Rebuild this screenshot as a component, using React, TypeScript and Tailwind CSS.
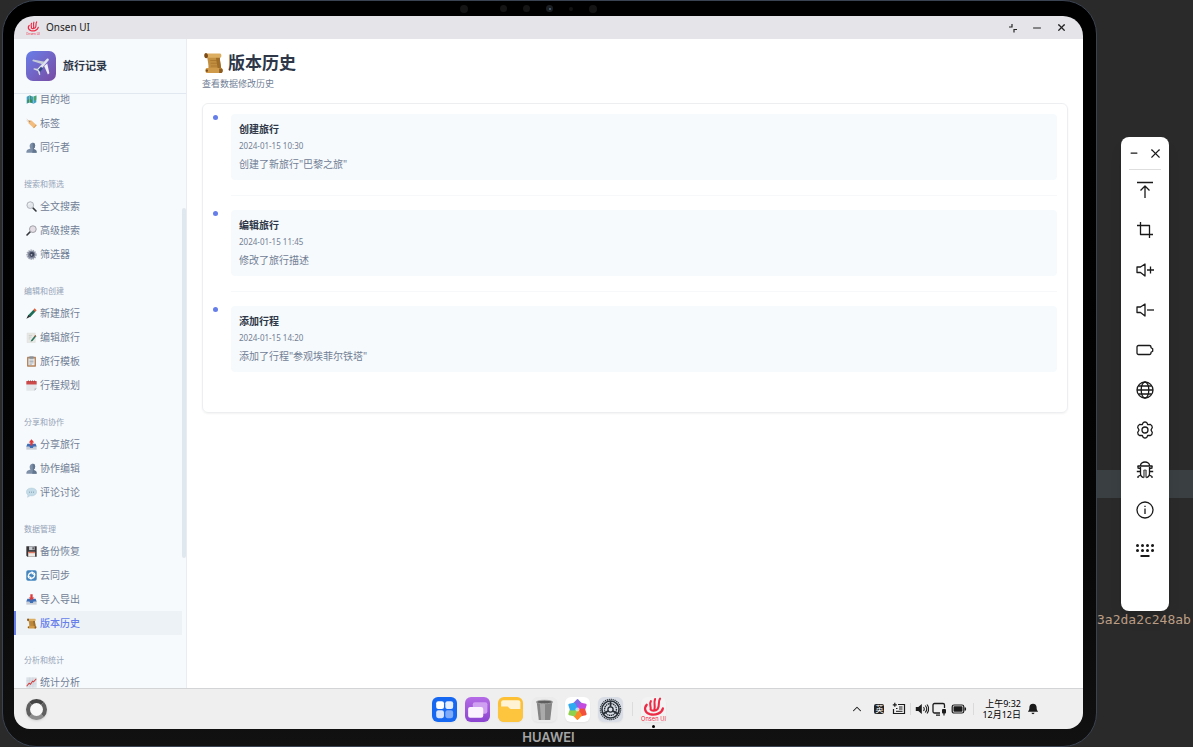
import type { ReactNode } from "react";
import { ChevronUp, Minus, X } from "lucide-react";

type IconProps = { className?: string };

const Svg = ({
  box = 16,
  className,
  children,
}: {
  box?: number;
  className?: string;
  children: ReactNode;
}) => (
  <svg
    viewBox={`0 0 ${box} ${box}`}
    className={className}
    fill="none"
    aria-hidden="true"
  >
    {children}
  </svg>
);

const emojis: Record<string, ReactNode> = {
  map: (
    <>
      <path d="M1 4l4-2 6 2 4-2v10l-4 2-6-2-4 2z" fill="#3f9fc4" />
      <path d="M5 2l2.500.8-.5 4L9 9v4.200L5 12 2 13.500V9l3-2z" fill="#3c8f5c" />
      <path d="M11 4l4-2v6l-3 2-2-3z" fill="#4ca36a" />
      <path d="M5 2v10M11 4v10" stroke="#c9e4ea" strokeWidth=".7" />
    </>
  ),
  tag: (
    <>
      <path d="M3.500 3l4.500.5 7.500 7-4 4.500-8-7.500z" fill="#f2bd7f" />
      <path d="M15.500 10.500l-4 4.500-1-1 4-4.500z" fill="#d99a55" />
      <circle cx="5.300" cy="5.200" r="1" fill="#8a6a4a" />
      <path d="M5 5L1 1.500M5 5.500L.8 4" stroke="#c9b9a5" strokeWidth=".8" />
    </>
  ),
  people: (
    <>
      <path
        d="M.5 15.500c0-3 1-4.500 4-5.200l2-1C4.500 7 5 1.500 9.500 1.200 13 1.200 14 4 13 7.500l-1.500 2 .3 1c2.700.6 3.700 2 3.700 5z"
        fill="#7d90a8"
      />
      <path
        d="M9.500 1.200C13 1.200 14 4 13 7.500l-1.500 2 .3 1c2.700.6 3.700 2 3.700 5H9l1-5z"
        fill="#62768f"
      />
    </>
  ),
  search: (
    <>
      <path d="M9.500 9.500l5 5" stroke="#33363b" strokeWidth="2.400" strokeLinecap="round" />
      <circle cx="6.200" cy="6" r="4.900" fill="#e3e6ea" stroke="#a6abb2" strokeWidth="1.200" />
      <path d="M3.800 5.500a2.700 2.700 0 012.600-2.200" stroke="#fff" />
    </>
  ),
  searchRight: (
    <>
      <path d="M6.500 9.500l-5 5" stroke="#33363b" strokeWidth="2.400" strokeLinecap="round" />
      <circle cx="10" cy="6" r="4.900" fill="#e5dde4" stroke="#8f9299" strokeWidth="1.200" />
    </>
  ),
  gear: (
    <>
      <circle cx="8" cy="8.300" r="6.600" stroke="#a3a8b4" strokeWidth="2" strokeDasharray="2 1.200" />
      <circle cx="8" cy="8.300" r="5.800" fill="#80879a" />
      <circle cx="8.500" cy="8" r="3.600" fill="#3c4257" />
      <circle cx="8" cy="8.500" r="1.300" fill="#b4b9c6" />
    </>
  ),
  crayon: (
    <>
      <path d="M12.500.5l3 2.700-2.500 3-3-2.700z" fill="#d9603c" />
      <path d="M10.500 3l3 2.600-7.500 7.900-3.200-2.700z" fill="#1d6e58" />
      <path d="M3.300 10.300l2.900 2.600L.5 15.500z" fill="#272b2d" />
    </>
  ),
  memo: (
    <>
      <path d="M1.500 1.500h12v14h-12z" fill="#e9e8e4" stroke="#d4d5d2" strokeWidth=".5" />
      <path d="M4 5h5M4 7.500h4M4 10h2" stroke="#b3b9bd" strokeWidth=".8" />
      <path d="M13.500 4.500l1.500 1.500-5.500 7-2.800.8.900-2.300z" fill="#287560" />
      <path d="M13.500 4.500L15 6l-1 1.100-1.500-1.400z" fill="#cc5e43" />
    </>
  ),
  clipboard: (
    <>
      <rect x="1.500" y="1" width="13" height="14.500" rx="1" fill="#b4835a" />
      <path d="M3.500 3.500h9v10h-9z" fill="#ebeef0" />
      <path d="M5 .5h6v3.500H5z" fill="#85909c" />
      <path d="M5 6h6M5 8h6M5 10h6M5 12h3.500" stroke="#7e8994" strokeWidth=".8" />
    </>
  ),
  calendar: (
    <>
      <path d="M.5 3h15v9.500l-3 3H.5z" fill="#e4e7ea" />
      <path d="M.5 1.500h15v5H.5z" fill="#ce4a4a" />
      <path d="M12.500 15.500v-3h3z" fill="#a6abb0" />
      <path d="M3.500.5v2M6.500.5v2M9.500.5v2M12.500.5v2" stroke="#86383c" />
    </>
  ),
  outbox: (
    <>
      <path d="M.5 10h15v5.500H.5z" fill="#c9ced6" />
      <path d="M2 7h12l1.500 4H11l-1 2H6l-1-2H.5z" fill="#3d6fb8" />
      <path d="M8 .5l4 4.500H9.700v4.500H6.300V5H4z" fill="#de3b3b" />
    </>
  ),
  inbox: (
    <>
      <path d="M.5 10h15v5.500H.5z" fill="#c9ced6" />
      <path d="M2 7h12l1.500 4H11l-1 2H6l-1-2H.5z" fill="#3d6fb8" />
      <path d="M8 9.500L4 5h2.300V.5h3.400V5H12z" fill="#de3b3b" />
    </>
  ),
  speech: (
    <>
      <path
        d="M8 1.500c4.400 0 7.500 2.400 7.500 5.700S12.400 13 8 13l-2-.2L2.200 15l.7-3.500C1.400 10.500.5 9 .5 7.200c0-3.300 3.100-5.700 7.500-5.700z"
        fill="#c4dbe8"
        stroke="#a8c6d8"
        strokeWidth=".6"
      />
      <path d="M4.500 7.500h1.300M7.400 7.500h1.300M10.200 7.500h1.300" stroke="#6f8da2" strokeWidth="1.300" />
    </>
  ),
  floppy: (
    <>
      <path d="M.5.5h15v15H2L.5 14z" fill="#373538" />
      <path d="M4.500.5h8V6h-8z" fill="#c6cbd0" />
      <path d="M9.500 1.700h1.700V5H9.500z" fill="#373538" />
      <path d="M3.200 8.500h10v7h-10z" fill="#eeeae6" />
      <path d="M3.200 8.500h10v2h-10z" fill="#df7862" />
    </>
  ),
  sync: (
    <>
      <rect x=".4" y=".4" width="15.200" height="15.200" rx="2.500" fill="#4486bd" />
      <path
        d="M4.200 10.500A4.300 4.300 0 018.500 4M11.800 5.500A4.300 4.300 0 017.500 12"
        stroke="#fff"
        strokeWidth="2"
      />
      <path d="M8 1.500L12 4 8.500 7zM8 14.500L4 12l3.500-3zM2 9h4.500L3.500 12.500zM14 7H9.500l3-3.500z" fill="#fff" />
    </>
  ),
  scroll: (
    <>
      <path d="M3.500 2h9.800c-.8 3 .5 6 .7 10.500H4.700C5 9 4 6 3.500 2z" fill="#c28e40" />
      <path d="M10 3.500h3.200c-.6 3 .6 5 .8 9h-2.500z" fill="#a06d29" />
      <path d="M2.500 1h10.700c1.100.3 1.200 2.600.1 3.200H4.500z" fill="#dcae62" />
      <path d="M2.700.8C4.500.8 5 4.200 3.200 4.600 1.400 4.900 1 1.200 2.700.8z" fill="#7b4c17" />
      <path d="M3.500 11.700h10.800c1.200.6 1 3.400-.3 3.600H3.500c-1.500-.3-1.500-3.300 0-3.600z" fill="#cf9b4b" />
      <path d="M12.500 12h1.800c1.200.6 1 3-.3 3.200h-1.500z" fill="#8d5c20" />
      <path d="M3.500 12.600c1.200.2 1.200 1.800 0 2-1-.2-1-1.800 0-2z" fill="#7b4c17" />
      <path d="M6 6.200h5M6.300 8.200h5M6.500 10.200h5" stroke="#a3712c" strokeWidth=".5" />
    </>
  ),
  chart: (
    <>
      <path d="M.5.5h15v15H.5z" fill="#dbe1e7" />
      <path d="M.5 5.500h15M.5 10h15M5.500.5v15M10 .5v15" stroke="#bdc7d1" strokeWidth=".5" />
      <path d="M1 13.500l3.500-4.500 2 1.500 3-4.500 1.500 1L15 2.500" stroke="#d33f3f" strokeWidth="1.500" />
    </>
  ),
  plane: (
    <>
      <path d="M12.700 2.200c1.300-.5 1.800.2 1.300 1.400L6.300 12.600 4.500 11z" fill="#dfe4ec" />
      <path d="M9 6.500L1 4l.6-1.200L11 4.500z" fill="#c4cbd7" />
      <path d="M10.500 8l3 6.800 1.200-1L13 6z" fill="#eef0f3" />
      <path d="M6 10.300l-3.700-.5-.4.8 3.400 1.300zM7 11.500l.4 3.500-.8.4-1.300-3.600z" fill="#d5dae3" />
      <path d="M8 8.500L5.800 11l1.500 1.800L9.500 10z" fill="#314a82" />
    </>
  ),
};

const Emoji = ({ name, className }: { name: string; className?: string }) => (
  <Svg className={className}>{emojis[name]}</Svg>
);

const OnsenMark = ({ className }: IconProps) => (
  <svg viewBox="0 0 24 24" className={className} fill="none" aria-hidden="true">
    <path
      d="M5.500 7.500c-3 3.500-1.500 7.500 3 9 5.500 1.500 11.500-1 12.500-5.500"
      stroke="#ee2b46"
      strokeWidth="2.200"
      strokeLinecap="round"
    />
    <path
      d="M9.500 4c-2 3 .5 5-.3 8M13.500 2c-1.600 4 .5 6-.6 10M18.300 1.500c-2.500 3.500.2 6-2.300 10M9.200 12c.8 1.500 5 1.500 6.800-.5"
      stroke="#ee2b46"
      strokeWidth="2"
      strokeLinecap="round"
    />
    <text
      x="12"
      y="23.500"
      textAnchor="middle"
      fontSize="5.500"
      fontFamily="Inter, sans-serif"
      fill="#ee2b46"
    >
      Onsen UI
    </text>
  </svg>
);

type NavItem = { icon: string; label: string; active?: boolean };

const sections: { title?: string; items: NavItem[] }[] = [
  {
    items: [
      { icon: "map", label: "目的地" },
      { icon: "tag", label: "标签" },
      { icon: "people", label: "同行者" },
    ],
  },
  {
    title: "搜索和筛选",
    items: [
      { icon: "search", label: "全文搜索" },
      { icon: "searchRight", label: "高级搜索" },
      { icon: "gear", label: "筛选器" },
    ],
  },
  {
    title: "编辑和创建",
    items: [
      { icon: "crayon", label: "新建旅行" },
      { icon: "memo", label: "编辑旅行" },
      { icon: "clipboard", label: "旅行模板" },
      { icon: "calendar", label: "行程规划" },
    ],
  },
  {
    title: "分享和协作",
    items: [
      { icon: "outbox", label: "分享旅行" },
      { icon: "people", label: "协作编辑" },
      { icon: "speech", label: "评论讨论" },
    ],
  },
  {
    title: "数据管理",
    items: [
      { icon: "floppy", label: "备份恢复" },
      { icon: "sync", label: "云同步" },
      { icon: "inbox", label: "导入导出" },
      { icon: "scroll", label: "版本历史", active: true },
    ],
  },
  {
    title: "分析和统计",
    items: [{ icon: "chart", label: "统计分析" }],
  },
];

const versions = [
  { title: "创建旅行", time: "2024-01-15 10:30", text: '创建了新旅行"巴黎之旅"' },
  { title: "编辑旅行", time: "2024-01-15 11:45", text: "修改了旅行描述" },
  { title: "添加行程", time: "2024-01-15 14:20", text: '添加了行程"参观埃菲尔铁塔"' },
];

const TitleBar = () => (
  <header className="flex h-[23px] shrink-0 items-center bg-[#e5e4e9] pl-3 pr-4 text-[#222]">
    <OnsenMark className="size-[14px]" />
    <span className="ml-1.5 text-[10px]">Onsen UI</span>
    <div className="ml-auto flex gap-3">
      <button aria-label="还原" className="flex size-3 items-center justify-center">
        <Svg box={12} className="size-3">
          <path d="M5 2v3H2M7 10.500V7.500h3" stroke="currentColor" strokeWidth="1.200" />
        </Svg>
      </button>
      <button aria-label="最小化" className="flex size-3 items-center justify-center">
        <Minus size={12} />
      </button>
      <button aria-label="关闭" className="flex size-3 items-center justify-center">
        <X size={11} strokeWidth={2.8} />
      </button>
    </div>
  </header>
);

const Sidebar = () => (
  <aside className="flex w-[173px] shrink-0 flex-col border-r border-[#e8edf2] bg-[#f7fafc]">
    <div className="flex items-center gap-[7px] border-b border-[#e2e8f0] p-3">
      <div className="flex size-[30px] items-center justify-center rounded-[7px] bg-linear-135 from-[#667eea] to-[#764ba2]">
        <Emoji name="plane" className="size-5" />
      </div>
      <span className="text-[11px] font-bold text-[#2d3748]">旅行记录</span>
    </div>
    <div className="flex min-h-0 flex-1">
      <nav className="min-h-0 flex-1 overflow-hidden">
        <div className="-mt-[7px]">
          {sections.map((section, i) => (
            <section key={i}>
              {section.title && (
                <h2 className="pb-1 pl-[10px] pt-[19px] text-[8px] leading-3 text-[#94a3b8]">
                  {section.title}
                </h2>
              )}
              {section.items.map((item) => (
                <a
                  key={item.label}
                  href="#"
                  className={`flex h-6 items-center gap-[3px] border-l-2 pl-[10px] text-[10px] leading-3 ${
                    item.active
                      ? "border-[#667eea] bg-[#edf2f7] font-medium text-[#667eea]"
                      : "border-transparent text-[#718096]"
                  }`}
                >
                  <Emoji name={item.icon} className="size-[11px]" />
                  {item.label}
                </a>
              ))}
            </section>
          ))}
        </div>
      </nav>
      <div className="w-1 pt-[114px]">
        <div className="h-[350px] rounded-full bg-[#e0e8ef]" />
      </div>
    </div>
  </aside>
);

const Main = () => (
  <main className="min-w-0 flex-1 bg-white px-[15px] pt-3">
    <h1 className="flex items-center gap-1 text-[17px] font-bold leading-6 text-[#2d3748]">
      <Emoji name="scroll" className="size-[22px]" />
      版本历史
    </h1>
    <p className="mt-[3px] text-[9px] leading-3 text-[#718096]">查看数据修改历史</p>
    <div className="mt-[13px] rounded-md border border-[#eceef0] p-[10px] shadow-xs">
      {versions.map((v, i) => (
        <article key={v.time} className="flex gap-[13px]">
          <span className="mt-px size-[5px] shrink-0 rounded-full bg-[#667eea]" />
          <div
            className={`mb-3.5 flex-1 border-b pb-[15px] ${
              i < versions.length - 1 ? "border-[#f7f8fa]" : "border-transparent"
            }`}
          >
            <div className="rounded bg-[#f7fafc] p-2">
              <h3 className="text-[10px] font-bold leading-[14px] text-[#2d3748]">{v.title}</h3>
              <time className="mt-1 block text-[8px] leading-3 text-[#718096]">{v.time}</time>
              <p className="mt-1 text-[10px] leading-4 text-[#718096]">{v.text}</p>
            </div>
          </div>
        </article>
      ))}
    </div>
  </main>
);

const petals = [
  { angle: "rotate(0 12 12)", color: "#7d6be8" },
  { angle: "rotate(60 12 12)", color: "#c34be0" },
  { angle: "rotate(120 12 12)", color: "#f2503c" },
  { angle: "rotate(180 12 12)", color: "#fb8a25" },
  { angle: "rotate(240 12 12)", color: "#8fd14a" },
  { angle: "rotate(300 12 12)", color: "#2fa9f0" },
];

const dockApps = [
  {
    name: "应用中心",
    tile: "bg-[#1667f2]",
    art: (
      <>
        <rect x="4" y="4" width="7.500" height="7.500" rx="2" fill="#fff" />
        <rect x="12.800" y="4" width="7.500" height="7.500" rx="2" fill="#e5eefe" />
        <rect x="4" y="12.800" width="7.500" height="7.500" rx="2" fill="#d6e4fd" />
        <rect x="12.800" y="12.800" width="7.500" height="7.500" rx="2" fill="#7faaf8" />
      </>
    ),
  },
  {
    name: "多任务",
    tile: "bg-linear-to-b from-[#b56be6] to-[#8b44cf]",
    art: (
      <>
        <rect x="7.500" y="5" width="14" height="11" rx="2" fill="#cfa0ef" />
        <rect x="3" y="9.500" width="14.500" height="10.500" rx="2" fill="#fbf3ff" />
      </>
    ),
  },
  {
    name: "文件管理",
    tile: "bg-[#fdbf33]",
    art: (
      <>
        <path d="M3 5a2 2 0 012-2h14.500a2 2 0 012 2v8H3z" fill="#fff3d3" />
        <path d="M0 9h9c1.500 0 1.500 2.500 3.500 2.500H24V19a5 5 0 01-5 5H5a5 5 0 01-5-5z" fill="#fdc43d" />
      </>
    ),
  },
  {
    name: "回收站",
    tile: "bg-[#ebebeb]",
    art: (
      <>
        <path d="M4.500 4.500h15L17.500 22h-11z" fill="#858585" />
        <path d="M7.500 6l1.200 16h3.800V6z" fill="#aaa" />
        <ellipse cx="12" cy="4.800" rx="7.800" ry="1.700" fill="#5d5d5d" stroke="#a5a5a5" strokeWidth=".8" />
      </>
    ),
  },
  {
    name: "图库",
    tile: "bg-white",
    art: (
      <>
        {petals.map((p) => (
          <path
            key={p.color}
            d="M12 11.500L8.800 6.500 12 3l3.200 3.500z"
            fill={p.color}
            stroke={p.color}
            strokeWidth="2"
            strokeLinejoin="round"
            transform={p.angle}
          />
        ))}
        <circle cx="12" cy="12" r="2" fill="#fff" opacity=".6" />
      </>
    ),
  },
  {
    name: "设置",
    tile: "bg-[#d9dee6]",
    art: (
      <>
        <circle cx="12" cy="12" r="9.700" stroke="#262c33" strokeWidth="1.300" strokeDasharray="1.100 .8" />
        <circle cx="12" cy="12" r="8.200" stroke="#262c33" strokeWidth="1.500" />
        <circle cx="12" cy="12" r="5.700" stroke="#262c33" strokeWidth="1.300" strokeDasharray="1.200 .6" />
        <circle cx="12" cy="12" r="2.500" stroke="#262c33" strokeWidth="1.300" />
        <path d="M12 9.300V4M9.700 13.400L5 16M14.300 13.400L19 16" stroke="#262c33" strokeWidth="1.700" />
      </>
    ),
  },
];

const Taskbar = () => (
  <footer className="grid h-[41px] shrink-0 grid-cols-[1fr_auto_1fr] items-center border-t border-[#d3d4d6] bg-[#efefef]">
    <button
      aria-label="主页"
      className="ml-3 size-[21px] rounded-full border-4 border-[#5f5f5f] border-b-[#8c8c8c] border-t-[#454545] bg-[#f7f7f7] shadow"
    />
    <div className="flex items-center">
      <div className="flex w-[192px] justify-between">
        {dockApps.map((app) => (
          <button
            key={app.name}
            aria-label={app.name}
            className={`size-[25px] overflow-hidden rounded-[6px] shadow-xs ${app.tile}`}
          >
            <Svg box={24} className="size-full">
              {app.art}
            </Svg>
          </button>
        ))}
      </div>
      <div className="mx-2 h-[14px] w-px bg-[#dcdcdc]" />
      <button
        aria-label="Onsen UI"
        className="relative size-[25px] rounded-[6px] bg-[#f3f3f3] shadow-xs"
      >
        <OnsenMark className="size-full" />
        <span className="absolute -bottom-[6px] left-[11px] size-[3px] rounded-full bg-black" />
      </button>
    </div>
    <div className="flex items-center justify-end pr-11 text-[#1b1b1b]">
      <ChevronUp size={14} strokeWidth={1.8} />
      <span className="ml-2.5 flex size-[10px] items-center justify-center rounded-xs bg-[#242424] text-[8px] leading-none text-white">
        英
      </span>
      <Svg box={14} className="ml-2 size-[14px]">
        <path d="M6 2.500h6.500v9h-11V7" stroke="currentColor" strokeWidth="1.200" />
        <path d="M2.800.8v4M.8 2.800h4" stroke="currentColor" strokeWidth="1.200" />
        <path d="M4 6.500h1.500M7 5h3.500M7 7h3.500M4 9.300h6.500" stroke="currentColor" />
      </Svg>
      <div className="ml-1 h-3 w-px bg-[#dadada]" />
      <Svg box={14} className="ml-1 size-[14px]">
        <path d="M.8 5h2.500L6.800 2v10L3.300 9H.8z" fill="currentColor" />
        <path
          d="M8.500 5c.9 1.200.9 2.800 0 4M10.200 3.500c1.800 2 1.800 5 0 7M12 2.500c2 2.700 2 6.300 0 9"
          stroke="currentColor"
          strokeWidth="1.100"
        />
      </Svg>
      <Svg box={16} className="ml-0.5 size-4">
        <path
          d="M9 12H3.500A1.500 1.500 0 012 10.500V4a1.500 1.500 0 011.500-1.500H12A1.500 1.500 0 0113.500 4v3M5 14.200h4"
          stroke="currentColor"
          strokeWidth="1.300"
        />
        <rect x="11" y="8" width="4" height="4.500" rx="1" fill="currentColor" />
        <path d="M13 12v2.500" stroke="currentColor" strokeWidth="1.200" />
      </Svg>
      <Svg box={16} className="ml-1 size-4">
        <rect x="1.200" y="4" width="11.600" height="8" rx="1.800" stroke="currentColor" strokeWidth="1.200" />
        <rect x="2.500" y="5.300" width="9" height="5.400" rx=".8" fill="currentColor" />
        <path d="M14.300 6.500v3" stroke="currentColor" strokeWidth="1.500" />
      </Svg>
      <div className="ml-1.5 h-3 w-px bg-[#dadada]" />
      <div className="ml-2 text-right text-[9px] leading-[11px] text-black">
        <div>上午9:32</div>
        <div>12月12日</div>
      </div>
      <Svg box={12} className="ml-1.5 size-3">
        <path
          d="M6 .7c2.400 0 3.600 1.600 3.600 3.600 0 2.500.6 3.200 1.500 4.500H.9C1.800 7.500 2.400 6.800 2.400 4.300 2.400 2.300 3.600.7 6 .7z"
          fill="currentColor"
        />
        <path d="M4.500 9.700h3c-.2 1.900-2.800 1.900-3 0z" fill="currentColor" />
      </Svg>
    </div>
  </footer>
);

const speaker = <path d="M1 6h3.500L9 3v12l-4.500-3.500H1z" />;

const tools = [
  { name: "置顶", art: <path d="M1 1.500h16M9 17V5M4.500 9.500L9 5l4.500 4.500" /> },
  { name: "截图", art: <path d="M1 4.500h12.500V17M4.500 1v12.500H17" /> },
  {
    name: "音量加",
    art: (
      <>
        {speaker}
        <path d="M11 9h7M14.500 5.500v7" />
      </>
    ),
  },
  {
    name: "音量减",
    art: (
      <>
        {speaker}
        <path d="M11 9h7" />
      </>
    ),
  },
  {
    name: "电池",
    art: (
      <path d="M2.500 4.500h11A1.500 1.500 0 0115 6v.8l1.700.9v2.600l-1.700.9v.8a1.500 1.500 0 01-1.500 1.500h-11A1.500 1.500 0 011 12V6a1.500 1.500 0 011.500-1.500z" />
    ),
  },
  {
    name: "网络",
    art: (
      <>
        <circle cx="9" cy="9" r="8" />
        <ellipse cx="9" cy="9" rx="3.800" ry="8" />
        <path d="M1 9h16M2.300 5h13.400M2.300 13h13.400" />
      </>
    ),
  },
  {
    name: "设置",
    art: (
      <>
        <path d="M7.300 1.500Q9 .5 10.700 1.500L11.800 3.600 14.500 3.500Q16.300 4.500 16.300 6.500L15 9l1.300 2.500Q16.300 13.500 14.500 14.500L11.800 14.400 10.700 16.500Q9 17.500 7.300 16.500L6.200 14.400 3.500 14.500Q1.700 13.500 1.700 11.500L3 9 1.700 6.500Q1.700 4.500 3.500 3.500L6.200 3.600z" />
        <circle cx="9" cy="9" r="3" />
      </>
    ),
  },
  {
    name: "调试",
    art: (
      <>
        <path d="M4.500 4.500a4.500 3.500 0 019 0M1.500 5h15M4.500 6v6.500c0 2 1.500 3.800 3.300 4M13.500 6v6.500c0 2-1.500 3.800-3.300 4" />
        <path d="M.8 10.500h3.700M13.500 10.500h3.700M2 17v-1.500l2.800-1.500M16 17v-1.500l-2.800-1.500M2 5v2l2.500.5M16 5v2l-2.500.5" />
        <path d="M7.800 16.500V9h2.400v7.500" fill="#aaa" strokeWidth=".7" />
      </>
    ),
  },
  {
    name: "信息",
    art: (
      <>
        <circle cx="9" cy="9" r="8" />
        <path d="M9 7.500V13M9 4.700v1.300" />
      </>
    ),
  },
  {
    name: "键盘",
    art: (
      <>
        <path
          d="M1.500 4.500h.01M6.500 4.500h.01M11.500 4.500h.01M16.500 4.500h.01M1.500 9.500h.01M6.500 9.500h.01M11.500 9.500h.01M16.500 9.500h.01"
          strokeWidth="3"
          strokeLinecap="round"
        />
        <path d="M4.500 15h9" strokeWidth="2" />
      </>
    ),
  },
];

const ToolPanel = () => (
  <div className="relative mx-auto w-12 rounded-lg bg-white px-2 pb-[41px] text-[#1a1a1a] shadow-lg">
    <div className="flex h-[33px] items-center justify-between border-b border-[#dedede]">
      <button aria-label="最小化">
        <Minus size={10} strokeWidth={3} />
      </button>
      <button aria-label="关闭">
        <X size={15} strokeWidth={1.8} className="-mr-0.5" />
      </button>
    </div>
    {tools.map((tool) => (
      <button
        key={tool.name}
        aria-label={tool.name}
        className="flex h-10 w-full items-center justify-center"
      >
        <svg
          viewBox="0 0 18 18"
          className="size-[18px]"
          fill="none"
          stroke="currentColor"
          strokeWidth="1.300"
          strokeLinejoin="round"
          aria-hidden="true"
        >
          {tool.art}
        </svg>
      </button>
    ))}
  </div>
);

const App = () => {
  return (
    <div className="flex h-screen overflow-hidden bg-[#2a2a2a] pl-0.5 font-['Noto_Sans','Noto_Sans_CJK_SC',sans-serif]">
      <div className="flex min-w-0 flex-1 flex-col rounded-[34px] border border-[#3a4352] bg-linear-to-b from-black to-[#111] pl-[11px] pr-[13px]">
        <div className="flex h-[15px] shrink-0 items-center justify-center gap-4 pr-10">
          <span className="mr-4 size-2 rounded-full bg-[#151515]" />
          <span className="size-[7px] rounded-full bg-[#151515]" />
          <span className="size-[7px] rounded-full bg-[#151515]" />
          <span className="flex size-[7px] items-center justify-center rounded-full bg-[#1c1f22]">
            <span className="size-0.5 rounded-full bg-[#4a6a80]" />
          </span>
          <span className="size-1 rounded-full bg-[#121212]" />
          <span className="size-2 rounded-full bg-[#151515]" />
        </div>
        <div className="flex min-h-0 flex-1 flex-col overflow-hidden rounded-t-[20px] rounded-b-2xl">
          <TitleBar />
          <div className="flex min-h-0 flex-1">
            <Sidebar />
            <Main />
          </div>
          <Taskbar />
        </div>
        <div className="flex h-[17px] shrink-0 items-center justify-center font-['Inter',sans-serif] text-[13px] font-semibold text-[#a5a5a5]">
          HUAWEI
        </div>
      </div>
      <div className="relative w-24 shrink-0 pt-[137px]">
        <div className="absolute inset-x-0 top-[470px] h-7 bg-[#3a3f42]" />
        <ToolPanel />
        <code className="block whitespace-nowrap font-['DejaVu_Sans_Mono',monospace] text-[13px] leading-[18px] text-[#bd9f86]">
          3a2da2c248ab
        </code>
      </div>
    </div>
  );
};

export default App;
